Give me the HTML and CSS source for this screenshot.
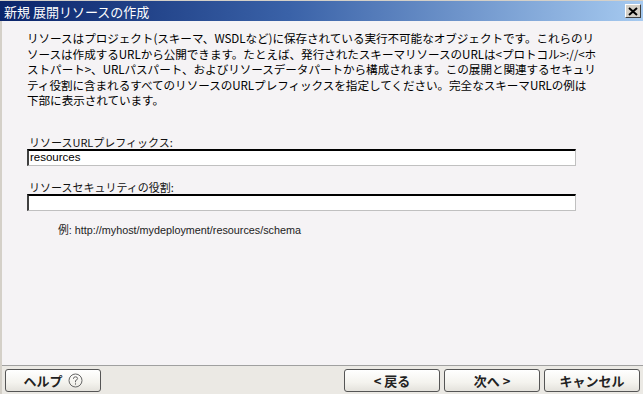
FILE: index.html
```html
<!DOCTYPE html>
<html lang="ja">
  <head>
    <meta charset="UTF-8" />
    <title>新規 展開リソースの作成</title>
    <link rel="stylesheet" href="styles.css">
  </head>
  <body>
    <div class="window">
      <div class="titlebar">
        <div class="title">新規 展開リソースの作成</div>
        <div class="close">
          <svg width="10" height="9" viewBox="0 0 10 9">
            <path d="M1 1 L9 8 M9 1 L1 8" stroke="#000" stroke-width="2" />
          </svg>
        </div>
      </div>

      <div class="dialog">
        <div class="content">
          <p class="intro">
            リソースはプロジェクト(スキーマ、WSDLなど)に保存されている実行不可能なオブジェクトです。これらのリ<br>
            ソースは作成するURLから公開できます。たとえば、発行されたスキーマリソースのURLは&lt;プロトコル&gt;://&lt;ホ<br>
            ストパート&gt;、URLパスパート、およびリソースデータパートから構成されます。この展開と関連するセキュリ<br>
            ティ役割に含まれるすべてのリソースのURLプレフィックスを指定してください。完全なスキーマURLの例は<br>
            下部に表示されています。
          </p>

          <div class="field">
            <label class="field-label">リソースURLプレフィックス:</label>
            <div class="textbox">resources</div>
          </div>

          <div class="field">
            <label class="field-label">リソースセキュリティの役割:</label>
            <div class="textbox"></div>
          </div>

          <div class="example">例: http://myhost/mydeployment/resources/schema</div>
        </div>

        <div class="footer">
          <button class="btn">ヘルプ
            <svg class="help-icon" width="15" height="15" viewBox="0 0 15 15">
              <circle cx="7.5" cy="7.5" r="6.5" fill="none" stroke="#666" stroke-width="1" />
              <path d="M5.4 5.8 Q5.4 3.8 7.5 3.8 Q9.6 3.8 9.6 5.6 Q9.6 6.7 7.5 7.6 L7.5 9.3" fill="none" stroke="#666" stroke-width="1" />
              <rect x="7" y="10.3" width="1" height="1.3" fill="#666" />
            </svg>
          </button>
          <div class="spacer"></div>
          <button class="btn">&lt; 戻る</button>
          <button class="btn">次へ &gt;</button>
          <button class="btn">キャンセル</button>
        </div>
      </div>
    </div>
  </body>
</html>
```

FILE: styles.css
```css
body {
  margin: 0;
  padding: 0;
  font-family: "Noto Sans CJK JP", "Liberation Sans", sans-serif;
  background-color: #f5f3f5;
  color: #000;
}

.window {
  width: 643px;
  height: 394px;
  display: flex;
  flex-direction: column;
  overflow: hidden;
}

.titlebar {
  height: 20px;
  border-top: 1px solid #d4d0c8;
  display: flex;
  align-items: center;
  justify-content: space-between;
  padding: 0 2px 0 4px;
  background: linear-gradient(to right, #0a246a 0%, #3a62a8 45%, #a6caf0 100%);
}

.title {
  color: white;
  font-size: 13px;
  white-space: nowrap;
}

.close {
  width: 16px;
  height: 14px;
  box-sizing: border-box;
  background-color: #d4d0c8;
  border: 1px solid;
  border-color: #fff #404040 #404040 #fff;
  display: flex;
  align-items: center;
  justify-content: center;
}

.dialog {
  flex-grow: 1;
  display: flex;
  flex-direction: column;
  border-left: 2px solid #d4d0c8;
}

.content {
  flex-grow: 1;
  padding: 10px 0 0 25px;
}

.intro {
  margin: 0;
  font-size: 11.6px;
  line-height: 15.5px;
  white-space: nowrap;
  letter-spacing: -0.05px;
}

.field {
  display: flex;
  flex-direction: column;
  margin-top: 26px;
}

.field + .field {
  margin-top: 14px;
}

.field-label {
  font-size: 11px;
  line-height: 14px;
  padding-left: 2px;
  color: #111;
}

.textbox {
  width: 549px;
  height: 17px;
  box-sizing: border-box;
  background-color: white;
  border: 1px solid;
  border-width: 2px 1px 1px 2px;
  border-color: #000 #c0c0c0 #c0c0c0 #404040;
  font-size: 11.5px;
  line-height: 13px;
  padding-left: 1px;
  font-family: "Liberation Sans", sans-serif;
}

.example {
  margin-top: 10px;
  padding-left: 31px;
  font-size: 10.8px;
  font-family: "Liberation Sans", "Noto Sans CJK JP", sans-serif;
  color: #222;
}

.footer {
  height: 29px;
  box-sizing: border-box;
  border-top: 1px solid #a0a0a0;
  background-color: #ebe9e4;
  display: flex;
  align-items: center;
  gap: 4px;
  padding: 1px 3px 0 3px;
}

.spacer {
  flex-grow: 1;
}

.btn {
  width: 96px;
  height: 23px;
  border: 1px solid #555;
  border-radius: 3px;
  background: linear-gradient(#ffffff, #f4f3ee 60%, #e4e2dc);
  font-family: "Noto Sans CJK JP", sans-serif;
  font-size: 13px;
  font-weight: bold;
  color: #222;
  display: flex;
  align-items: center;
  justify-content: center;
  gap: 5px;
  padding: 0;
}

.help-icon {
  display: block;
}
```
